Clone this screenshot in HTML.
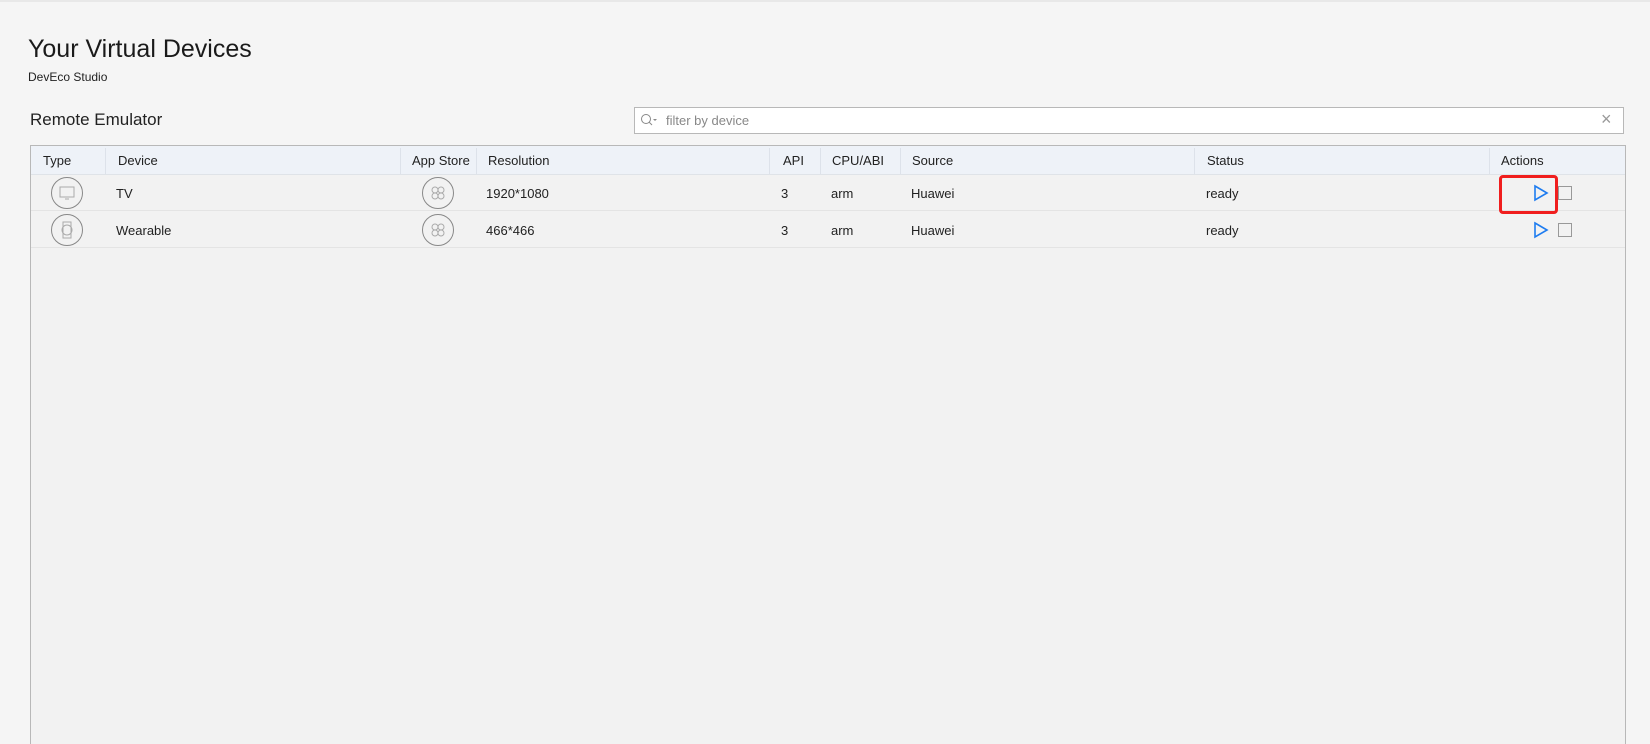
<!DOCTYPE html><html style="overflow:hidden;height:744px"><head><style>
body{margin:0;width:1650px;height:744px;background:#f5f5f5;font-family:"Liberation Sans",sans-serif;color:#222;position:relative;overflow:hidden}
.a{position:absolute;white-space:nowrap}
.t{font-size:13px}
.sep{position:absolute;top:148px;width:1px;height:26px;background:#dde2ea}
</style></head><body>
<div style="position:absolute;left:0;top:0;width:1650px;height:2px;background:#e8e8e8"></div>
<div class="a" style="left:28px;top:35px;font-size:25px;color:#1a1a1a">Your Virtual Devices</div>
<div class="a" style="left:28px;top:70px;font-size:12px">DevEco Studio</div>
<div class="a" style="left:30px;top:110px;font-size:17px">Remote Emulator</div>
<div style="position:absolute;left:634px;top:107px;width:988px;height:25px;background:#fff;border:1px solid #b8b8b8"></div>
<svg class="a" style="left:640px;top:113px" width="20" height="14"><circle cx="6" cy="6" r="4.5" fill="none" stroke="#888"/><line x1="9" y1="9" x2="12" y2="12" stroke="#888"/><path d="M13 6h4l-2 2z" fill="#888"/></svg>
<div class="a t" style="left:666px;top:113px;color:#888">filter by device</div>
<div class="a" style="left:1601px;top:109px;font-size:18px;color:#999">×</div>
<div style="position:absolute;left:30px;top:145px;width:1594px;height:600px;background:#f2f2f2;border:1px solid #b8b8b8;border-bottom:none"></div>
<div style="position:absolute;left:31px;top:146px;width:1594px;height:28px;background:#eef2f8;border-bottom:1px solid #dfe3e8"></div>
<div style="position:absolute;left:31px;top:210px;width:1594px;height:1px;background:#e4e4e4"></div>
<div style="position:absolute;left:31px;top:247px;width:1594px;height:1px;background:#e4e4e4"></div>
<div class="sep" style="left:105px"></div><div class="sep" style="left:400px"></div><div class="sep" style="left:476px"></div><div class="sep" style="left:769px"></div><div class="sep" style="left:820px"></div><div class="sep" style="left:900px"></div><div class="sep" style="left:1194px"></div><div class="sep" style="left:1489px"></div>
<div class="a t" style="top:153px;left:43px">Type</div><div class="a t" style="top:153px;left:118px">Device</div><div class="a t" style="top:153px;left:412px">App Store</div><div class="a t" style="top:153px;left:488px">Resolution</div><div class="a t" style="top:153px;left:783px">API</div><div class="a t" style="top:153px;left:832px">CPU/ABI</div><div class="a t" style="top:153px;left:912px">Source</div><div class="a t" style="top:153px;left:1207px">Status</div><div class="a t" style="top:153px;left:1501px">Actions</div>
<svg class="a" style="left:50px;top:176px" width="34" height="34"><circle cx="17" cy="17" r="15.5" fill="none" stroke="#888"/><rect x="10" y="11" width="14" height="10" fill="none" stroke="#aaa"/><line x1="15" y1="23" x2="19" y2="23" stroke="#aaa"/></svg>
<svg class="a" style="left:421px;top:176px" width="34" height="34"><circle cx="17" cy="17" r="15.5" fill="none" stroke="#888"/><g fill="none" stroke="#aaa"><circle cx="14" cy="14" r="3"/><circle cx="20" cy="14" r="3"/><circle cx="14" cy="20" r="3"/><circle cx="20" cy="20" r="3"/></g></svg>
<div class="a t" style="top:186px;left:116px">TV</div><div class="a t" style="top:186px;left:486px">1920*1080</div><div class="a t" style="top:186px;left:781px">3</div><div class="a t" style="top:186px;left:831px">arm</div><div class="a t" style="top:186px;left:911px">Huawei</div><div class="a t" style="top:186px;left:1206px">ready</div>
<svg class="a" style="left:50px;top:213px" width="34" height="34"><circle cx="17" cy="17" r="15.5" fill="none" stroke="#888"/><circle cx="17" cy="17" r="5" fill="none" stroke="#aaa"/><rect x="13" y="9" width="8" height="16" fill="none" stroke="#aaa"/></svg>
<svg class="a" style="left:421px;top:213px" width="34" height="34"><circle cx="17" cy="17" r="15.5" fill="none" stroke="#888"/><g fill="none" stroke="#aaa"><circle cx="14" cy="14" r="3"/><circle cx="20" cy="14" r="3"/><circle cx="14" cy="20" r="3"/><circle cx="20" cy="20" r="3"/></g></svg>
<div class="a t" style="top:223px;left:116px">Wearable</div><div class="a t" style="top:223px;left:486px">466*466</div><div class="a t" style="top:223px;left:781px">3</div><div class="a t" style="top:223px;left:831px">arm</div><div class="a t" style="top:223px;left:911px">Huawei</div><div class="a t" style="top:223px;left:1206px">ready</div>
<svg class="a" style="left:1533px;top:184px" width="16" height="18"><path d="M2 2L14 9L2 16Z" fill="none" stroke="#1e7cf0" stroke-width="1.6"/></svg>
<div style="position:absolute;left:1558px;top:186px;width:12px;height:12px;border:1px solid #999"></div>
<svg class="a" style="left:1533px;top:221px" width="16" height="18"><path d="M2 2L14 9L2 16Z" fill="none" stroke="#1e7cf0" stroke-width="1.6"/></svg>
<div style="position:absolute;left:1558px;top:223px;width:12px;height:12px;border:1px solid #999"></div>
<div style="position:absolute;left:1499px;top:175px;width:53px;height:33px;border:3px solid #f01e1e;border-radius:4px"></div>
</body></html>
